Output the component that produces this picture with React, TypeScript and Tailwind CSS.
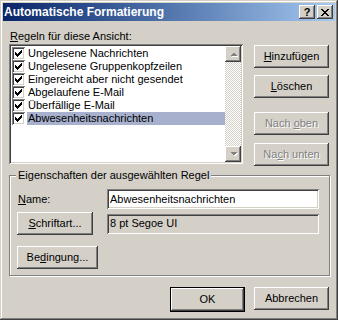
import React from 'react';

const raised =
  'shadow-[inset_-1px_-1px_#404040,inset_1px_1px_#ffffff,inset_-2px_-2px_#808080,inset_2px_2px_#d4d0c8]';
const sunken =
  'shadow-[inset_1px_1px_#808080,inset_-1px_-1px_#ffffff,inset_2px_2px_#404040,inset_-2px_-2px_#d4d0c8]';

const rules = [
  'Ungelesene Nachrichten',
  'Ungelesene Gruppenkopfzeilen',
  'Eingereicht aber nicht gesendet',
  'Abgelaufene E-Mail',
  'Überfällige E-Mail',
  'Abwesenheitsnachrichten',
];

function CheckBox() {
  // classic 7x7 pixel check mark
  const cols = [
    [3, 5],
    [4, 6],
    [5, 7],
    [6, 6],
    [7, 5],
    [8, 4],
    [9, 3],
  ];
  return (
    <div className={`w-[13px] h-[13px] bg-white shrink-0 ${sunken}`}>
      <svg width="13" height="13" viewBox="0 0 13 13" shapeRendering="crispEdges">
        {cols.map(([x, y]) => (
          <rect key={x} x={x} y={y} width="1" height="3" fill="#000" />
        ))}
      </svg>
    </div>
  );
}

function Button({
  children,
  disabled,
  isDefault,
  className = '',
}: {
  children: React.ReactNode;
  disabled?: boolean;
  isDefault?: boolean;
  className?: string;
}) {
  const inner = (
    <div
      className={`h-[23px] flex items-center justify-center bg-[#d4d0c8] ${raised} ${
        disabled ? 'text-[#808080] [text-shadow:1px_1px_0_#ffffff]' : 'text-black'
      } ${isDefault ? '' : className}`}
    >
      {children}
    </div>
  );
  if (isDefault) {
    return <div className={`border border-black ${className}`}>{inner}</div>;
  }
  return inner;
}

function Arrow({ up }: { up?: boolean }) {
  return (
    <div className={`w-[16px] h-[16px] bg-[#d4d0c8] flex items-center justify-center ${raised}`}>
      <svg width="16" height="16" viewBox="0 0 16 16" shapeRendering="crispEdges">
        {up ? (
          <>
            <polygon points="5,10 12,10 8.5,6.5" fill="#ffffff" transform="translate(1,1)" />
            <polygon points="5,10 12,10 8.5,6.5" fill="#808080" />
          </>
        ) : (
          <>
            <polygon points="5,6 12,6 8.5,9.5" fill="#ffffff" transform="translate(1,1)" />
            <polygon points="5,6 12,6 8.5,9.5" fill="#808080" />
          </>
        )}
      </svg>
    </div>
  );
}

export default function App() {
  return (
    <div className="w-[338px] h-[320px] bg-[#d4d0c8] p-[3px] flex flex-col text-[11px] leading-[13px] text-black font-['Liberation_Sans',Arial,sans-serif] shadow-[inset_-1px_-1px_#404040,inset_1px_1px_#d4d0c8,inset_-2px_-2px_#808080,inset_2px_2px_#ffffff]">
      {/* Title bar */}
      <div className="h-[18px] flex items-center pl-[1px] pr-[2px] bg-gradient-to-r from-[#0a246a] to-[#a6caf0]">
        <span className="flex-1 text-white font-bold text-[12px]">Automatische Formatierung</span>
        <div className="flex gap-[2px]">
          <div className={`w-[16px] h-[14px] bg-[#d4d0c8] flex items-center justify-center font-bold text-[11px] ${raised}`}>
            ?
          </div>
          <div className={`w-[16px] h-[14px] bg-[#d4d0c8] flex items-center justify-center ${raised}`}>
            <svg width="8" height="7" viewBox="0 0 8 7" shapeRendering="crispEdges">
              <path d="M0 0h2v1h-2zM6 0h2v1h-2zM1 1h2v1h-2zM5 1h2v1h-2zM2 2h4v1h-4zM3 3h2v1h-2zM2 4h4v1h-4zM1 5h2v1h-2zM5 5h2v1h-2zM0 6h2v1h-2zM6 6h2v1h-2z" fill="#000" />
            </svg>
          </div>
        </div>
      </div>

      <div className="pl-[6px] pt-[9px] flex flex-col">
        <div className="flex gap-[11px]">
          {/* Rules list */}
          <div className="w-[234px] flex flex-col">
            <div className="h-[13px] mb-[1px] pl-[1px]">
              <u>R</u>egeln für diese Ansicht:
            </div>
            <div className={`h-[120px] bg-white p-[2px] flex ${sunken}`}>
              <div className="flex-1 pt-[1px]">
                {rules.map((r, i) => (
                  <div key={r} className="h-[13px] flex items-center">
                    <div className="pl-[1px] pr-[2px]">
                      <CheckBox />
                    </div>
                    <div className={`flex-1 h-[13px] pl-[1px] ${i === rules.length - 1 ? 'bg-[#a7b0cd]' : ''}`}>
                      {r}
                    </div>
                  </div>
                ))}
              </div>
              <div className="w-[16px] flex flex-col">
                <Arrow up />
                <div className="flex-1 bg-[repeating-conic-gradient(#d4d0c8_0_25%,#ffffff_0_50%)] bg-[length:2px_2px]" />
                <Arrow />
              </div>
            </div>
          </div>

          {/* Right buttons */}
          <div className="w-[75px] flex flex-col pt-[15px]">
            <Button>
              <span>
                <u>H</u>inzufügen
              </span>
            </Button>
            <Button className="mt-[7px]">
              <span>
                <u>L</u>öschen
              </span>
            </Button>
            <Button disabled className="mt-[14px]">
              <span>
                Nach <u>o</u>ben
              </span>
            </Button>
            <Button disabled className="mt-[8px]">
              <span>
                Na<u>c</u>h unten
              </span>
            </Button>
          </div>
        </div>

        {/* Group box */}
        <div className="relative mt-[9px] w-[321px] h-[101px] border border-[#808080] shadow-[inset_1px_1px_#ffffff,1px_1px_#ffffff] pl-[7px] pr-[10px] pt-[13px] flex flex-col">
          <span className="absolute -top-[7px] left-[6px] px-[2px] bg-[#d4d0c8]">
            Eigenschaften der ausgewählten Regel
          </span>
          <div className="flex items-center h-[20px]">
            <div className="w-[90px] pl-[1px]">
              <u>N</u>ame:
            </div>
            <div className={`flex-1 h-[20px] bg-white flex items-center pl-[3px] ${sunken}`}>
              Abwesenheitsnachrichten
            </div>
          </div>
          <div className="flex items-center mt-[3px]">
            <Button className="w-[76px]">
              <span>
                <u>S</u>chriftart...
              </span>
            </Button>
            <div className={`ml-[14px] flex-1 h-[20px] bg-[#d4d0c8] flex items-center pl-[3px] ${sunken}`}>
              8 pt Segoe UI
            </div>
          </div>
          <div className="mt-[11px]">
            <Button className="w-[81px]">
              <span>
                Be<u>d</u>ingung...
              </span>
            </Button>
          </div>
        </div>

        {/* Dialog buttons */}
        <div className="w-[320px] mt-[11px] flex justify-end gap-[9px]">
          <Button isDefault className="w-[75px]">
            OK
          </Button>
          <Button className="w-[75px]">Abbrechen</Button>
        </div>
      </div>
    </div>
  );
}
